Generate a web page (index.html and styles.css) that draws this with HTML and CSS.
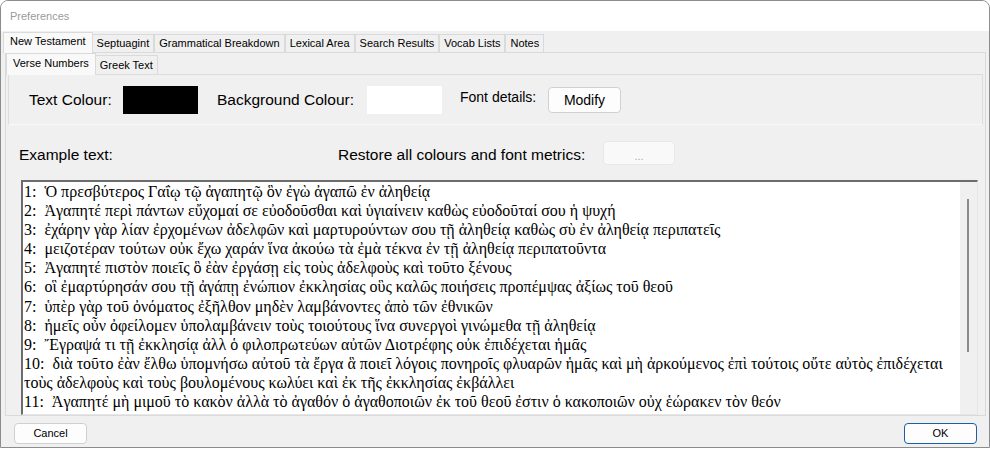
FILE: index.html
```html
<!DOCTYPE html>
<html>
<head>
<meta charset="utf-8">
<title>Preferences</title>
<link rel="stylesheet" href="styles.css">
</head>
<body>
<div class="window">
  <div class="titlebar">Preferences</div>
  <div class="client">
    <div class="tabs outer-tabs">
      <div class="tab active">New Testament</div>
      <div class="tab">Septuagint</div>
      <div class="tab">Grammatical Breakdown</div>
      <div class="tab">Lexical Area</div>
      <div class="tab">Search Results</div>
      <div class="tab">Vocab Lists</div>
      <div class="tab">Notes</div>
    </div>
    <div class="outer-panel">
      <div class="tabs inner-tabs">
        <div class="tab active">Verse Numbers</div>
        <div class="tab">Greek Text</div>
      </div>
      <div class="inner-panel">
        <span class="label big text-label">Text Colour:</span>
        <span class="swatch swatch-black"></span>
        <span class="label big bg-label">Background Colour:</span>
        <span class="swatch swatch-white"></span>
        <span class="label med font-label">Font details:</span>
        <button class="btn modify">Modify</button>
      </div>
      <div class="example-row">
        <span class="label big example-label">Example text:</span>
        <span class="label big restore-label">Restore all colours and font metrics:</span>
        <button class="btn dots" disabled>...</button>
      </div>
      <div class="textbox">
        <div class="text">1:  Ὁ πρεσβύτερος Γαΐῳ τῷ ἀγαπητῷ ὃν ἐγὼ ἀγαπῶ ἐν ἀληθείᾳ
2:  Ἀγαπητέ περὶ πάντων εὔχομαί σε εὐοδοῦσθαι καὶ ὑγιαίνειν καθὼς εὐοδοῦταί σου ἡ ψυχή
3:  ἐχάρην γὰρ λίαν ἐρχομένων ἀδελφῶν καὶ μαρτυρούντων σου τῇ ἀληθείᾳ καθὼς σὺ ἐν ἀληθείᾳ περιπατεῖς
4:  μειζοτέραν τούτων οὐκ ἔχω χαράν ἵνα ἀκούω τὰ ἐμὰ τέκνα ἐν τῇ ἀληθείᾳ περιπατοῦντα
5:  Ἀγαπητέ πιστὸν ποιεῖς ὃ ἐὰν ἐργάσῃ εἰς τοὺς ἀδελφοὺς καὶ τοῦτο ξένους
6:  οἳ ἐμαρτύρησάν σου τῇ ἀγάπῃ ἐνώπιον ἐκκλησίας οὓς καλῶς ποιήσεις προπέμψας ἀξίως τοῦ θεοῦ
7:  ὑπὲρ γὰρ τοῦ ὀνόματος ἐξῆλθον μηδὲν λαμβάνοντες ἀπὸ τῶν ἐθνικῶν
8:  ἡμεῖς οὖν ὀφείλομεν ὑπολαμβάνειν τοὺς τοιούτους ἵνα συνεργοὶ γινώμεθα τῇ ἀληθείᾳ
9:  Ἔγραψά τι τῇ ἐκκλησίᾳ ἀλλ ὁ φιλοπρωτεύων αὐτῶν Διοτρέφης οὐκ ἐπιδέχεται ἡμᾶς
10:  διὰ τοῦτο ἐὰν ἔλθω ὑπομνήσω αὐτοῦ τὰ ἔργα ἃ ποιεῖ λόγοις πονηροῖς φλυαρῶν ἡμᾶς καὶ μὴ ἀρκούμενος ἐπὶ τούτοις οὔτε αὐτὸς ἐπιδέχεται τοὺς ἀδελφοὺς καὶ τοὺς βουλομένους κωλύει καὶ ἐκ τῆς ἐκκλησίας ἐκβάλλει
11:  Ἀγαπητέ μὴ μιμοῦ τὸ κακὸν ἀλλὰ τὸ ἀγαθόν ὁ ἀγαθοποιῶν ἐκ τοῦ θεοῦ ἐστιν ὁ κακοποιῶν οὐχ ἑώρακεν τὸν θεόν</div>
        <div class="scrollbar"><div class="thumb"></div></div>
      </div>
    </div>
    <div class="footer">
      <button class="btn dlg">Cancel</button>
      <button class="btn dlg default">OK</button>
    </div>
  </div>
</div>
</body>
</html>
```

FILE: styles.css
```css
* { box-sizing: border-box; }
html, body { margin: 0; padding: 0; }
body {
  background: #ffffff;
  font-family: "Liberation Sans", Arial, sans-serif;
  color: #000;
}
.window {
  width: 990px;
  height: 448px;
  border: 1px solid #8c8c8c;
  border-radius: 8px 8px 0 0;
  display: flex;
  flex-direction: column;
  overflow: hidden;
  background: #f0f0f0;
}
.titlebar {
  flex: none;
  height: 30px;
  background: #fff;
  padding-left: 9px;
  font-size: 11px;
  line-height: 31px;
  color: #9a9a9a;
}
.client {
  flex: 1;
  display: flex;
  flex-direction: column;
  padding: 0 3px 0 4px;
  min-height: 0;
}
.tabs {
  flex: none;
  display: flex;
  align-items: flex-end;
  height: 21px;
}
.tab {
  font-size: 11px;
  line-height: 16px;
  padding: 0 4px;
  border: 1px solid #dadada;
  border-bottom: none;
  background: #f0f0f0;
  white-space: nowrap;
  text-align: center;
}
.outer-tabs .tab { height: 18px; }
.outer-tabs .tab.active {
  height: 21px;
  margin: 0 -1px -1px -2px;
  padding: 0 6px;
  line-height: 17px;
  background: #f9f9f9;
  position: relative;
  z-index: 1;
}
.outer-panel {
  flex: 1;
  border: 1px solid #dadada;
  background: #f0f0f0;
  display: flex;
  flex-direction: column;
  min-height: 0;
}
.inner-tabs { margin: 0 2px; }
.inner-tabs .tab { height: 19px; line-height: 18px; }
.inner-tabs .tab.active {
  height: 22px;
  margin: 0 -1px -1px -2px;
  padding: 0 6px;
  line-height: 19px;
  background: #f9f9f9;
  position: relative;
  z-index: 1;
}
.inner-panel {
  flex: none;
  height: 51px;
  margin: 0 2px;
  border: 1px solid #dcdcdc;
  border-bottom-color: #f8f8f8;
  display: flex;
  align-items: center;
  padding-left: 20px;
}
.label { white-space: nowrap; flex: none; }
.big { font-size: 15.5px; }
.med { font-size: 14px; }
.text-label { width: 94px; }
.swatch {
  width: 75px;
  height: 28px;
  flex: none;
}
.swatch-black { background: #000; }
.swatch-white { background: #fff; }
.bg-label { margin-left: 19px; width: 150px; }
.font-label { margin-left: 18px; width: 88px; margin-bottom: 5px; }
.btn {
  font-family: "Liberation Sans", Arial, sans-serif;
  background: #fdfdfd;
  border: 1px solid #d0d0d0;
  border-radius: 4px;
  color: #000;
  padding: 0;
  margin: 0;
}
.modify {
  width: 73px;
  height: 26px;
  font-size: 14px;
  line-height: 24px;
}
.example-row {
  flex: none;
  height: 24px;
  margin-top: 16px;
  padding-left: 13px;
  display: flex;
  align-items: center;
}
.example-row .label { padding-top: 3px; }
.example-label { width: 319px; }
.restore-label { width: 265px; }
.dots {
  width: 72px;
  height: 24px;
  background: #f9f9f9;
  border-color: #e8e8e8;
  color: #a8a8a8;
  font-size: 11px;
  padding-top: 6px;
}
.textbox {
  flex: none;
  height: 235px;
  width: 957px;
  margin: 15px 0 0 15px;
  background: #fff;
  border-top: 2px solid #6c6c6c;
  border-left: 2px solid #6c6c6c;
  border-right: 1px solid #e6e6e6;
  border-bottom: 1px solid #e6e6e6;
  display: flex;
  overflow: hidden;
}
.text {
  flex: 1;
  min-width: 0;
  padding-left: 1px;
  font-family: "Liberation Serif", "Times New Roman", "DejaVu Serif", serif;
  font-size: 16px;
  line-height: 19.1px;
  white-space: pre-wrap;
  overflow: hidden;
}
.scrollbar {
  flex: none;
  width: 17px;
  background: #f0f0f0;
  padding: 17px 0 0 7px;
}
.thumb {
  width: 2px;
  height: 153px;
  background: #8a8a8a;
}
.footer {
  flex: none;
  height: 31px;
  padding: 7px 9px 0 9px;
  display: flex;
  justify-content: space-between;
  align-items: flex-start;
}
.dlg {
  width: 73px;
  height: 21px;
  font-size: 11px;
  line-height: 19px;
}
.default {
  border-color: #1b5fa6;
}
```
